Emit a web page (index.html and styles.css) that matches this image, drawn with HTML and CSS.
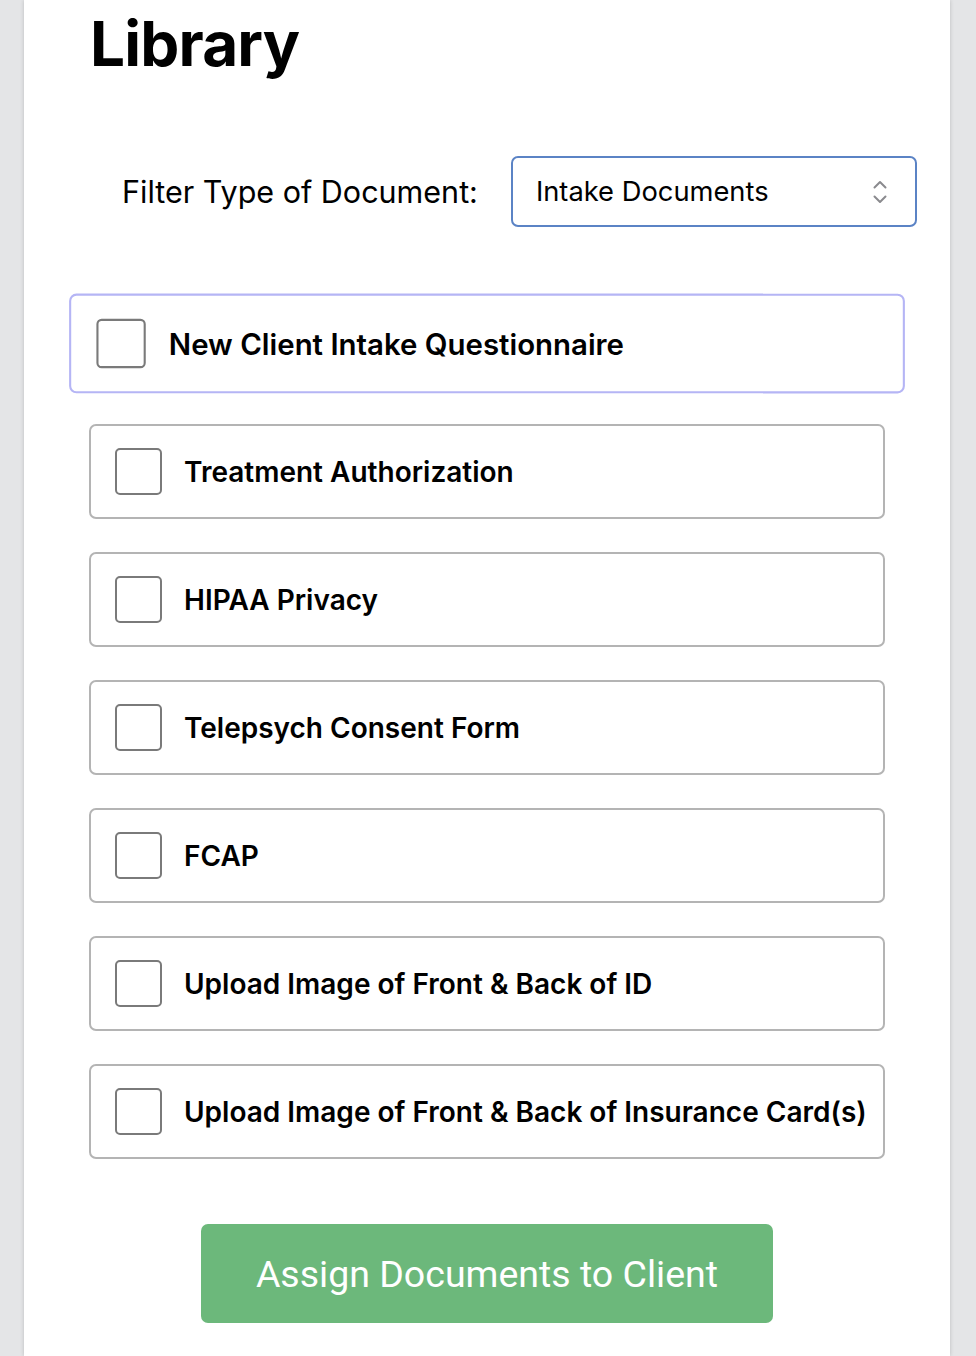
FILE: index.html
```html
<!DOCTYPE html>
<html lang="en">
<head>
<meta charset="utf-8">
<title>Library</title>
<link rel="stylesheet" href="styles.css">
</head>
<body>
<main class="panel">
  <h1 class="title">Library</h1>
  <div class="filter-row">
    <label class="filter-label" for="doc-type">Filter Type of Document:</label>
    <div class="select">
      <span class="select-value">Intake Documents</span>
      <svg class="select-icon" width="16" height="26" viewBox="0 0 16 26" aria-hidden="true">
        <path d="M2.5 8.5 L8 3 L13.5 8.5" fill="none" stroke="#8a8a8e" stroke-width="2" stroke-linecap="round" stroke-linejoin="round"/>
        <path d="M2.5 17.5 L8 23 L13.5 17.5" fill="none" stroke="#8a8a8e" stroke-width="2" stroke-linecap="round" stroke-linejoin="round"/>
      </svg>
    </div>
  </div>
  <ul class="doc-list">
    <li class="doc-item doc-item--active"><span class="checkbox"></span><span class="doc-name">New Client Intake Questionnaire</span></li>
    <li class="doc-item"><span class="checkbox"></span><span class="doc-name">Treatment Authorization</span></li>
    <li class="doc-item"><span class="checkbox"></span><span class="doc-name">HIPAA Privacy</span></li>
    <li class="doc-item"><span class="checkbox"></span><span class="doc-name">Telepsych Consent Form</span></li>
    <li class="doc-item"><span class="checkbox"></span><span class="doc-name">FCAP</span></li>
    <li class="doc-item"><span class="checkbox"></span><span class="doc-name">Upload Image of Front &amp; Back of ID</span></li>
    <li class="doc-item"><span class="checkbox"></span><span class="doc-name">Upload Image of Front &amp; Back of Insurance Card(s)</span></li>
  </ul>
  <div class="actions">
    <button class="assign-btn" type="button">Assign Documents to Client</button>
  </div>
</main>
</body>
</html>
```

FILE: styles.css
```css
* { box-sizing: border-box; }

html, body {
  margin: 0;
  padding: 0;
  background: #e4e5e7;
  font-family: Inter, "Noto Sans", "Liberation Sans", sans-serif;
  color: #000;
}

.panel {
  width: 926px;
  margin-left: 24px;
  min-height: 1356px;
  background: #fff;
  box-shadow: 0 0 4px rgba(0, 0, 0, 0.18);
  padding-top: 6px;
}

.title {
  margin: 0 0 0 66px;
  font-size: 62px;
  font-weight: 700;
  line-height: 76px;
  letter-spacing: -0.8px;
}

.filter-row {
  display: flex;
  align-items: center;
  margin-top: 74px;
  padding-left: 98px;
}

.filter-label {
  font-size: 30.5px;
  font-weight: 400;
  margin-right: 33px;
}

.select {
  width: 406px;
  height: 71px;
  border: 2px solid #5b83c5;
  border-radius: 7px;
  display: flex;
  align-items: center;
  justify-content: space-between;
  padding: 0 27px 0 23px;
}

.select-value {
  font-size: 27.3px;
}

.select-icon { display: block; }

.doc-list {
  list-style: none;
  margin: 69px 65px 0 65px;
  padding: 0;
  display: flex;
  flex-direction: column;
  gap: 33px;
}

.doc-item {
  display: flex;
  align-items: center;
  height: 95px;
  border: 2px solid #b4b4b4;
  border-radius: 7px;
  padding-left: 24px;
}

.doc-item--active {
  border-color: #b5b5f5;
  transform: scale(1.05);
}

.checkbox {
  width: 47px;
  height: 47px;
  border: 2px solid #7a7a7a;
  border-radius: 5px;
  flex: none;
}

.doc-name {
  margin-left: 22px;
  font-size: 28px;
  font-weight: 600;
}

.actions {
  display: flex;
  justify-content: center;
  margin-top: 65px;
}

.assign-btn {
  width: 572px;
  height: 99px;
  border: none;
  border-radius: 7px;
  background: #6cb87b;
  color: #fff;
  font-family: Roboto, "Noto Sans", sans-serif;
  font-size: 37.5px;
  font-weight: 400;
}
```
